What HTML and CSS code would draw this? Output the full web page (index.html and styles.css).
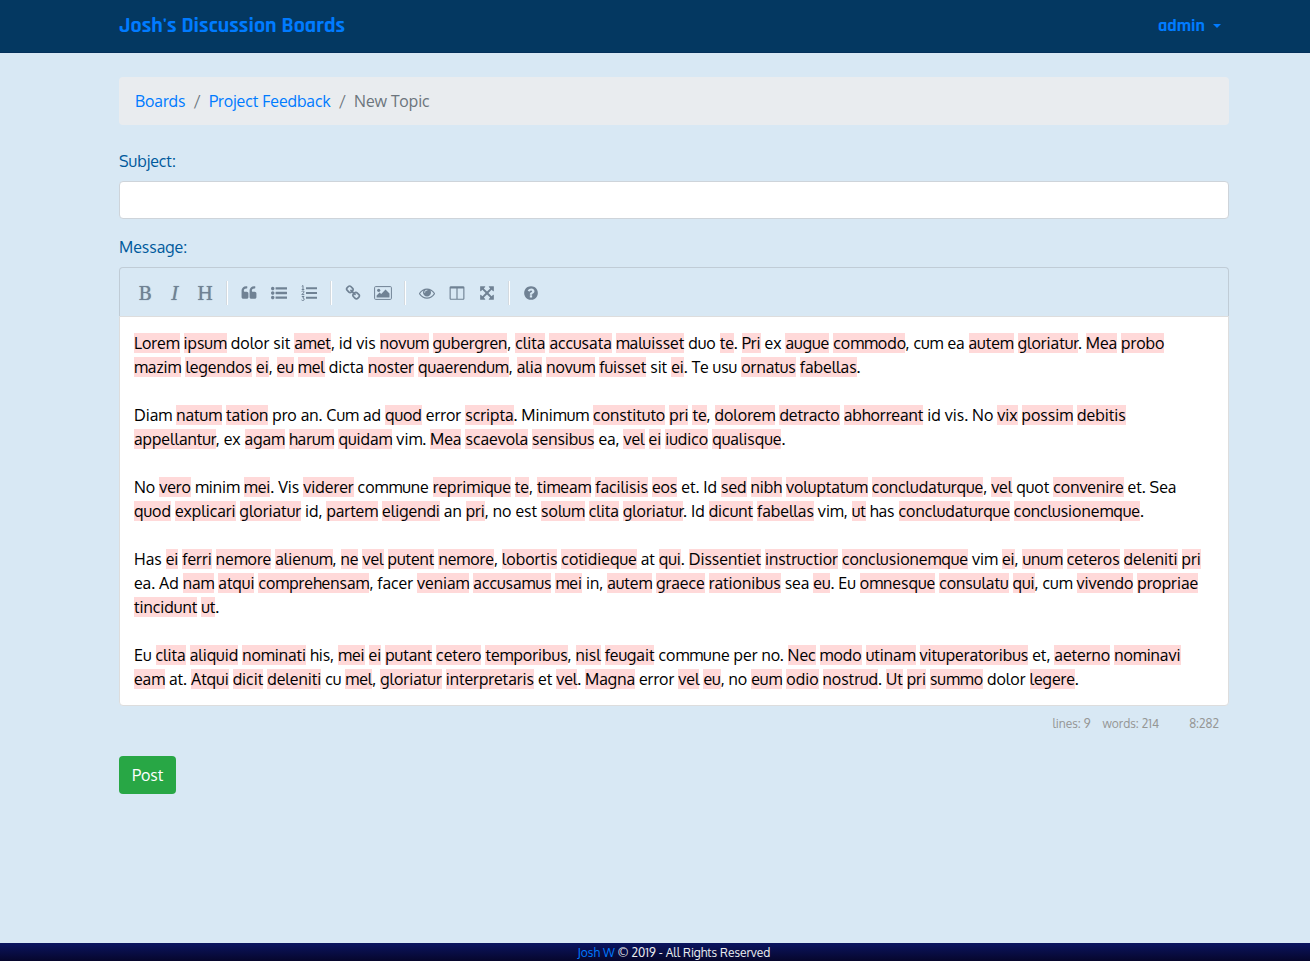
FILE: index.html
```html
<!DOCTYPE html>
<html lang="en">
<head>
<meta charset="utf-8">
<meta name="viewport" content="width=device-width, initial-scale=1">
<title>New Topic - Josh's Discussion Boards</title>
<link rel="stylesheet" href="styles.css">
</head>
<body>
<header class="navbar">
  <div class="container navbar-inner">
    <a class="brand" href="#">Josh's Discussion Boards</a>
    <button class="user-menu" type="button" aria-haspopup="true">admin<span class="caret"></span></button>
  </div>
</header>
<main class="container content">
  <nav aria-label="Breadcrumb">
    <ol class="breadcrumb">
      <li><a href="#">Boards</a></li>
      <li><a href="#">Project Feedback</a></li>
      <li class="current">New Topic</li>
    </ol>
  </nav>
  <form>
    <div class="field">
      <label for="subject">Subject:</label>
      <input class="text-input" id="subject" type="text">
    </div>
    <div class="field">
      <label id="message-label">Message:</label>
      <div class="editor">
        <div class="toolbar">
          <button type="button" class="letter" title="Bold">B</button>
          <button type="button" class="letter italic" title="Italic">I</button>
          <button type="button" class="letter" title="Heading">H</button>
          <i class="separator"></i>
          <button type="button" title="Quote"><svg viewBox="0 0 1792 1792"><path d="M832 960v384q0 80-56 136t-136 56h-384q-80 0-136-56t-56-136v-704q0-104 40.500-198.500t109.500-163.500 163.500-109.500 198.500-40.500h64q26 0 45 19t19 45v128q0 26-19 45t-45 19h-64q-106 0-181 75t-75 181v32q0 40 28 68t68 28h224q80 0 136 56t56 136zm896 0v384q0 80-56 136t-136 56h-384q-80 0-136-56t-56-136v-704q0-104 40.500-198.500t109.500-163.500 163.500-109.500 198.500-40.500h64q26 0 45 19t19 45v128q0 26-19 45t-45 19h-64q-106 0-181 75t-75 181v32q0 40 28 68t68 28h224q80 0 136 56t56 136z"/></svg></button>
          <button type="button" title="Generic List"><svg viewBox="0 0 1792 1792"><path d="M384 1408q0 80-56 136t-136 56-136-56-56-136 56-136 136-56 136 56 56 136zm0-512q0 80-56 136t-136 56-136-56-56-136 56-136 136-56 136 56 56 136zm1408 416v192q0 13-9.500 22.500t-22.500 9.500h-1216q-13 0-22.500-9.500t-9.500-22.500v-192q0-13 9.500-22.500t22.500-9.500h1216q13 0 22.500 9.500t9.500 22.500zm-1408-928q0 80-56 136t-136 56-136-56-56-136 56-136 136-56 136 56 56 136zm1408 416v192q0 13-9.500 22.500t-22.500 9.500h-1216q-13 0-22.500-9.500t-9.500-22.500v-192q0-13 9.500-22.500t22.500-9.500h1216q13 0 22.500 9.500t9.500 22.500zm0-512v192q0 13-9.500 22.500t-22.500 9.500h-1216q-13 0-22.500-9.500t-9.500-22.500v-192q0-13 9.500-22.500t22.500-9.500h1216q13 0 22.500 9.500t9.500 22.500z"/></svg></button>
          <button type="button" title="Numbered List"><svg viewBox="0 0 16 16"><path d="M5 2.300h11v2H5zM5 7h11v2H5zM5 11.700h11v2H5z"/><path class="line" d="M.8 1.300 2 .5v4M.7 4.500h2.600M.7 6.700q.4-.8 1.300-.8 1 0 1 .9 0 .8-2.200 2.800h2.500M.8 11.500h2.200l-1.200 1.500q1.400 0 1.400 1.200 0 1.300-1.400 1.300-.8 0-1.300-.6"/></svg></button>
          <i class="separator"></i>
          <button type="button" title="Create Link"><svg viewBox="0 0 1792 1792"><path d="M1520 1216q0-40-28-68l-208-208q-28-28-68-28-42 0-72 32 3 3 19 18.500t21.500 21.500 15 19 13 25.500 3.500 27.500q0 40-28 68t-68 28q-15 0-27.500-3.500t-25.500-13-19-15-21.500-21.500-18.500-19q-33 31-33 73 0 40 28 68l206 207q27 27 68 27 40 0 68-26l147-146q28-28 28-67zm-703-705q0-40-28-68l-206-207q-28-28-68-28-39 0-68 27l-147 146q-28 28-28 67 0 40 28 68l208 208q27 27 68 27 42 0 72-31-3-3-19-18.500t-21.500-21.500-15-19-13-25.500-3.500-27.500q0-40 28-68t68-28q15 0 27.500 3.500t25.500 13 19 15 21.500 21.500 18.500 19q33-31 33-73zm895 705q0 120-85 203l-147 146q-83 83-203 83-121 0-204-85l-206-207q-83-83-83-203 0-123 88-209l-88-88q-86 88-208 88-120 0-204-84l-208-208q-84-84-84-204t85-203l147-146q83-83 203-83 121 0 204 85l206 207q83 83 83 203 0 123-88 209l88 88q86-88 208-88 120 0 204 84l208 208q84 84 84 204z"/></svg></button>
          <button type="button" title="Insert Image"><svg class="wide" viewBox="0 0 18 16"><rect class="line" x=".6" y="1.600" width="16.800" height="12.800" rx="1"/><circle cx="4.700" cy="5.300" r="1.600"/><path d="M2.600 12.600v-2.200l3-3 1.600 1.500 4.300-4.300 4 4v4z"/></svg></button>
          <i class="separator"></i>
          <button type="button" title="Toggle Preview"><svg viewBox="0 0 1792 1792"><path d="M1664 960q-152-236-381-353 61 104 61 225 0 185-131.500 316.500t-316.500 131.500-316.500-131.500-131.500-316.500q0-121 61-225-229 117-381 353 133 205 333.500 326.500t434.500 121.500 434.500-121.500 333.500-326.500zm-720-384q0-20-14-34t-34-14q-125 0-214.500 89.500t-89.500 214.500q0 20 14 34t34 14 34-14 14-34q0-86 61-147t147-61q20 0 34-14t14-34zm848 384q0 34-20 69-140 230-376.500 368.500t-499.500 138.500-499.500-139-376.500-368q-20-35-20-69t20-69q140-229 376.500-368t499.500-139 499.500 139 376.500 368q20 35 20 69z"/></svg></button>
          <button type="button" title="Toggle Side by Side"><svg viewBox="0 0 1792 1792"><path d="M224 1536h608v-1152h-640v1120q0 13 9.500 22.500t22.500 9.500zm1376-32v-1120h-640v1152h608q13 0 22.500-9.500t9.500-22.500zm128-1216v1216q0 66-47 113t-113 47h-1344q-66 0-113-47t-47-113v-1216q0-66 47-113t113-47h1344q66 0 113 47t47 113z"/></svg></button>
          <button type="button" title="Toggle Fullscreen"><svg viewBox="0 0 1792 1792"><path d="M1411 541l-355 355 355 355 144-144q29-31 70-14 39 17 39 59v448q0 26-19 45t-45 19h-448q-42 0-59-40-17-39 14-69l144-144-355-355-355 355 144 144q31 30 14 69-17 40-59 40h-448q-26 0-45-19t-19-45v-448q0-42 40-59 39-17 69 14l144 144 355-355-355-355-144 144q-19 19-45 19-12 0-24-5-40-17-40-59v-448q0-26 19-45t45-19h448q42 0 59 40 17 39-14 69l-144 144 355 355 355-355-144-144q-31-30-14-69 17-40 59-40h448q26 0 45 19t19 45v448q0 42-39 59-13 5-25 5-26 0-45-19z"/></svg></button>
          <i class="separator"></i>
          <button type="button" title="Markdown Guide"><svg viewBox="0 0 1792 1792"><path d="M1024 1376v-192q0-14-9-23t-23-9h-192q-14 0-23 9t-9 23v192q0 14 9 23t23 9h192q14 0 23-9t9-23zm256-672q0-88-55.500-163t-138.500-116-170-41q-243 0-371 213-15 24 8 42l132 100q7 6 19 6 16 0 25-12 53-68 86-92 34-24 86-24 48 0 85.500 26t37.500 59q0 38-20 61t-68 45q-63 28-115.500 86.500t-52.500 125.500v36q0 14 9 23t23 9h192q14 0 23-9t9-23q0-19 21.500-49.500t54.500-49.500q32-18 49-28.500t46-35 44.500-48 28-60.500 12.500-81zm384 192q0 209-103 385.500t-279.500 279.500-385.500 103-385.500-103-279.500-279.500-103-385.500 103-385.500 279.500-279.500 385.500-103 385.500 103 279.500 279.500 103 385.500z"/></svg></button>
        </div>
        <div class="message" contenteditable="true" role="textbox" aria-multiline="true" aria-labelledby="message-label" spellcheck="false">
<p><mark>Lorem</mark> <mark>ipsum</mark> dolor sit <mark>amet</mark>, id vis <mark>novum</mark> <mark>gubergren</mark>, <mark>clita</mark> <mark>accusata</mark> <mark>maluisset</mark> duo <mark>te</mark>. <mark>Pri</mark> ex <mark>augue</mark> <mark>commodo</mark>, cum ea <mark>autem</mark> <mark>gloriatur</mark>. <mark>Mea</mark> <mark>probo</mark>
<mark>mazim</mark> <mark>legendos</mark> <mark>ei</mark>, <mark>eu</mark> <mark>mel</mark> dicta <mark>noster</mark> <mark>quaerendum</mark>, <mark>alia</mark> <mark>novum</mark> <mark>fuisset</mark> sit <mark>ei</mark>. Te usu <mark>ornatus</mark> <mark>fabellas</mark>.</p>
<p>Diam <mark>natum</mark> <mark>tation</mark> pro an. Cum ad <mark>quod</mark> error <mark>scripta</mark>. Minimum <mark>constituto</mark> <mark>pri</mark> <mark>te</mark>, <mark>dolorem</mark> <mark>detracto</mark> <mark>abhorreant</mark> id vis. No <mark>vix</mark> <mark>possim</mark> <mark>debitis</mark>
<mark>appellantur</mark>, ex <mark>agam</mark> <mark>harum</mark> <mark>quidam</mark> vim. <mark>Mea</mark> <mark>scaevola</mark> <mark>sensibus</mark> ea, <mark>vel</mark> <mark>ei</mark> <mark>iudico</mark> <mark>qualisque</mark>.</p>
<p>No <mark>vero</mark> minim <mark>mei</mark>. Vis <mark>viderer</mark> commune <mark>reprimique</mark> <mark>te</mark>, <mark>timeam</mark> <mark>facilisis</mark> <mark>eos</mark> et. Id <mark>sed</mark> <mark>nibh</mark> <mark>voluptatum</mark> <mark>concludaturque</mark>, <mark>vel</mark> quot <mark>convenire</mark> et. Sea
<mark>quod</mark> <mark>explicari</mark> <mark>gloriatur</mark> id, <mark>partem</mark> <mark>eligendi</mark> an <mark>pri</mark>, no est <mark>solum</mark> <mark>clita</mark> <mark>gloriatur</mark>. Id <mark>dicunt</mark> <mark>fabellas</mark> vim, <mark>ut</mark> has <mark>concludaturque</mark> <mark>conclusionemque</mark>.</p>
<p>Has <mark>ei</mark> <mark>ferri</mark> <mark>nemore</mark> <mark>alienum</mark>, <mark>ne</mark> <mark>vel</mark> <mark>putent</mark> <mark>nemore</mark>, <mark>lobortis</mark> <mark>cotidieque</mark> at <mark>qui</mark>. <mark>Dissentiet</mark> <mark>instructior</mark> <mark>conclusionemque</mark> vim <mark>ei</mark>, <mark>unum</mark> <mark>ceteros</mark> <mark>deleniti</mark> <mark>pri</mark>
ea. Ad <mark>nam</mark> <mark>atqui</mark> <mark>comprehensam</mark>, facer <mark>veniam</mark> <mark>accusamus</mark> <mark>mei</mark> in, <mark>autem</mark> <mark>graece</mark> <mark>rationibus</mark> sea <mark>eu</mark>. Eu <mark>omnesque</mark> <mark>consulatu</mark> <mark>qui</mark>, cum <mark>vivendo</mark> <mark>propriae</mark>
<mark>tincidunt</mark> <mark>ut</mark>.</p>
<p>Eu <mark>clita</mark> <mark>aliquid</mark> <mark>nominati</mark> his, <mark>mei</mark> <mark>ei</mark> <mark>putant</mark> <mark>cetero</mark> <mark>temporibus</mark>, <mark>nisl</mark> <mark>feugait</mark> commune per no. <mark>Nec</mark> <mark>modo</mark> <mark>utinam</mark> <mark>vituperatoribus</mark> et, <mark>aeterno</mark> <mark>nominavi</mark>
<mark>eam</mark> at. <mark>Atqui</mark> <mark>dicit</mark> <mark>deleniti</mark> cu <mark>mel</mark>, <mark>gloriatur</mark> <mark>interpretaris</mark> et <mark>vel</mark>. <mark>Magna</mark> error <mark>vel</mark> <mark>eu</mark>, no <mark>eum</mark> <mark>odio</mark> <mark>nostrud</mark>. <mark>Ut</mark> <mark>pri</mark> <mark>summo</mark> dolor <mark>legere</mark>.</p>
        </div>
      </div>
      <div class="status"><span>lines: 9</span><span>words: 214</span><span class="cursor">8:282</span></div>
    </div>
    <button class="post" type="submit">Post</button>
  </form>
</main>
<footer class="footer">
  <p><a href="#">Josh W</a> © 2019 - All Rights Reserved</p>
</footer>
</body>
</html>
```
FILE: styles.css
```css
*, *::before, *::after { box-sizing: border-box; }

body {
  margin: 0;
  min-height: 100vh;
  display: flex;
  flex-direction: column;
  background: #d8e8f4;
  color: #005a9c;
  font: 16px/24px Oxygen, "Open Sans", "Noto Sans", sans-serif;
}

a { color: #007bff; text-decoration: none; }
button, input { font: inherit; }
p { margin: 0; }

.navbar, .content, .footer { padding-left: 38px; }

.container { width: 100%; }

.navbar {
  background: #043861;
  border-bottom: 1px solid #03305a;
}

.navbar-inner {
  max-width: 1110px;
  min-height: 52px;
  margin: 0 auto;
  display: flex;
  align-items: center;
  justify-content: space-between;
  font-family: Rajdhani, Roboto, sans-serif;
  font-weight: 700;
}

.brand { font-size: 22px; }

.user-menu {
  display: flex;
  align-items: center;
  gap: 8px;
  padding: 8px;
  border: 0;
  background: none;
  color: #007bff;
  font-size: 18px;
  font-weight: 700;
}

.caret {
  border: 4px solid transparent;
  border-top-color: currentColor;
  border-bottom: 0;
}

.content {
  flex: 1;
  max-width: 1148px;
  margin: 24px auto;
}

.breadcrumb {
  display: flex;
  margin: 0 0 24px;
  padding: 12px 16px;
  list-style: none;
  border-radius: 4px;
  background: #e9ecef;
}

.breadcrumb li + li::before {
  content: "/";
  padding: 0 8px;
  color: #6c757d;
}

.breadcrumb .current { color: #6c757d; }

.field { margin-bottom: 16px; }
.field label { display: block; margin-bottom: 8px; }

.text-input {
  display: block;
  width: 100%;
  height: 38px;
  padding: 6px 12px;
  border: 1px solid #ced4da;
  border-radius: 4px;
  background: #fff;
  color: #495057;
}

.toolbar {
  display: flex;
  flex-wrap: wrap;
  align-items: center;
  padding: 10px 10px 8px;
  border: 1px solid #c0ccd6;
  border-bottom: 0;
  border-radius: 4px 4px 0 0;
}

.toolbar button {
  display: flex;
  align-items: center;
  justify-content: center;
  width: 30px;
  height: 30px;
  padding: 0;
  border: 0;
  background: none;
  color: #708294;
}

.toolbar svg { width: 16px; height: 16px; fill: currentColor; }
.toolbar svg.wide { width: 18px; }
.toolbar .line { fill: none; stroke: currentColor; }

.toolbar .letter {
  font: 18px "DejaVu Serif", serif;
  text-shadow: 0 0 1px currentColor;
}

.toolbar .italic { font-style: italic; }

.separator {
  width: 2px;
  height: 24px;
  margin: 0 6px;
  border-left: 1px solid #d3dae0;
  border-right: 1px solid #fff;
}

.message {
  padding: 14px;
  border: 1px solid #ddd;
  border-radius: 0 0 4px 4px;
  background: #fff;
  color: #000;
}

.message p + p { margin-top: 24px; }
.message mark { background: #ffd9d9; color: inherit; }

.status {
  display: flex;
  justify-content: flex-end;
  gap: 12px;
  padding: 10px 10px 8px;
  color: #959694;
  font-size: 12px;
  line-height: 16px;
}

.status .cursor { min-width: 48px; text-align: right; }

.post {
  height: 38px;
  padding: 0 13px;
  border: 0;
  border-radius: 4px;
  background: #28a745;
  color: #fff;
}

.footer {
  padding-top: 2px;
  background: linear-gradient(#0b1560, #06062c);
  color: #e9ecef;
  font-size: 12px;
  line-height: 16px;
  text-align: center;
}
```
